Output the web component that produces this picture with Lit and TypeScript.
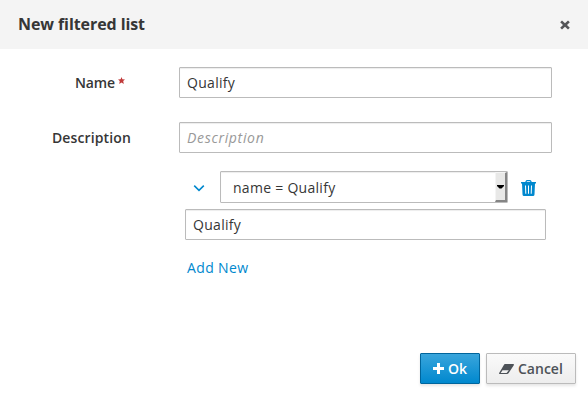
import { LitElement, html, css } from "lit";
import { customElement } from "lit/decorators.js";

@customElement("app-root")
export class AppRoot extends LitElement {
  static styles = css`
    :host {
      display: flex;
      flex-direction: column;
      box-sizing: border-box;
      width: 588px;
      height: 401px;
      background: #fff;
      color: #363636;
      font: 14px/20px "Open Sans", "Noto Sans", sans-serif;
      overflow: hidden;
    }
    * { box-sizing: border-box; }
    header {
      display: flex;
      align-items: center;
      justify-content: space-between;
      height: 49px;
      flex: none;
      padding: 0 18px;
      background: #f4f4f4;
    }
    h4 { margin: 0; padding-bottom: 2px; font-size: 16px; font-weight: 700; letter-spacing: -0.08px; }
    button { font: inherit; cursor: pointer; }
    .close { display: flex; padding: 0; border: 0; background: none; color: #545558; }
    svg { display: block; fill: currentColor; flex: none; }
    main { flex: 1; padding-top: 18px; }
    .row { display: flex; align-items: center; height: 31px; margin-bottom: 24px; }
    .label { width: 131px; margin-right: 48px; text-align: right; font-weight: 600; }
    .description { letter-spacing: 0.13px; }
    .required { display: flex; justify-content: flex-end; padding-right: 6px; gap: 3px; font-weight: 550; letter-spacing: -0.1px; }
    .required svg { color: #c03a3a; margin-top: 4px; }
    .field {
      display: block;
      height: 31px;
      margin: 0;
      padding: 0 7px;
      border: 1px solid #bbb;
      border-radius: 1px;
      outline: 0;
      background: #fff;
      box-shadow: inset 0 1px 1px rgba(3, 3, 3, 0.075);
      color: #363636;
      font: 14px/20px "Open Sans", "Noto Sans", sans-serif;
      letter-spacing: 0.3px;
    }
    .field::placeholder { color: #999; font-style: italic; opacity: 1; letter-spacing: 0.68px; }
    .wide { width: 373px; }
    .expression { display: flex; align-items: center; height: 32px; margin: -6px 0 6px 193px; color: #0088ce; }
    .expression > svg { margin-top: 2px; }
    .select {
      display: flex;
      align-items: center;
      width: 288px;
      height: 32px;
      margin: 0 13px 0 15px;
      border: 1px solid #bbb;
      border-radius: 1px;
      box-shadow: inset 0 1px 1px rgba(3, 3, 3, 0.075);
      color: #363636;
      letter-spacing: 0.28px;
    }
    .select span { flex: 1; padding: 2px 0 0 12px; }
    .arrow {
      display: flex;
      align-items: center;
      justify-content: center;
      width: 12px;
      height: 30px;
      border: 1px solid #f4f4f4;
      border-right: 2px solid #858585;
      border-bottom: 2px solid #858585;
      background: #e8e8e7;
      color: #000;
    }
    .value { width: 361px; margin-left: 185px; }
    .add { display: inline-block; margin: 18px 0 0 187px; color: #0088ce; text-decoration: none; letter-spacing: 0.36px; }
    footer { display: flex; justify-content: flex-end; gap: 6px; height: 48px; padding-right: 12px; }
    .btn {
      display: flex;
      align-items: center;
      height: 31px;
      padding: 0 12px;
      border: 1px solid #bbb;
      border-radius: 1px;
      background: linear-gradient(#fafafa, #ededed);
      box-shadow: 0 2px 3px rgba(3, 3, 3, 0.1);
      color: #4d5258;
      font-weight: 600;
    }
    .primary { width: 60px; border-color: #00659c; background: linear-gradient(#39a5dc, #0088ce); color: #fff; gap: 4px; }
    .primary span { font-weight: 550; }
    .cancel { width: 90px; gap: 4px; }
  `;

  render() {
    return html`
      <header>
        <h4>New filtered list</h4>
        <button class="close" aria-label="Close">
          <svg width="10" height="10" viewBox="0 0 10 10"><path d="M2 .5 5 3.200 8 .5 9.800 2.300 7 5 9.800 7.700 8 9.500 5 6.800 2 9.500.2 7.700 3 5 .2 2.300z" /></svg>
        </button>
      </header>
      <main>
        <div class="row">
          <label class="label required"><span>Name</span>
            <svg width="7" height="7" viewBox="0 0 7 7"><path d="M3.500 0l.9 2.200L7 2.400 5.200 4.100 5.800 7 3.500 5.600 1.200 7l.6-2.900L0 2.400l2.600-.2z" /></svg>
          </label>
          <input class="field wide" .value=${"Qualify"} />
        </div>
        <div class="row">
          <label class="label description">Description</label>
          <input class="field wide" placeholder="Description" />
        </div>
        <div class="expression">
          <svg width="12" height="8" viewBox="0 0 12 8"><path d="M1.200 1.700 6 6.300l4.800-4.600" fill="none" stroke="currentColor" stroke-width="1.6" /></svg>
          <div class="select" role="combobox">
            <span>name = Qualify</span>
            <div class="arrow"><svg width="7" height="4" viewBox="0 0 7 4"><path d="M0 0h7v1L4.500 3.500h-2L0 1z" /></svg></div>
          </div>
          <svg width="15" height="16" viewBox="0 0 15 16">
            <path fill-rule="evenodd" d="M0 2h4.200L5 .5Q5.300 0 6 0h3q.7 0 1 .5L10.800 2H15v1.600h-1L13.500 14.500Q13.400 16 12 16H3q-1.400 0-1.500-1.500L1 3.600H0zM5.600 2h3.800L9 1.200H6zM4 5.500l.3 8.300h1L5 5.500zM7 5.500v8.300h1V5.500zM10 5.500l-.3 8.300h1l.3-8.300z" />
          </svg>
        </div>
        <input class="field value" .value=${"Qualify"} />
        <a class="add">Add New</a>
      </main>
      <footer>
        <button class="btn primary">
          <svg width="11" height="11" viewBox="0 0 11 11"><path d="M4 0h3v4h4v3H7v4H4V7H0V4h4z" /></svg>
          <span>Ok</span>
        </button>
        <button class="btn cancel">
          <svg width="15" height="10" viewBox="0 0 15 10"><path fill-rule="evenodd" d="M6 0h8.300q1 .2.500 1.200L9.500 9.200Q9 10 8 10H.8Q-.3 9.800.3 8.800L5 .8Q5.300.1 6 0zM1.700 9H7.600l2.200-2.700H3.500z" /></svg>
          <span>Cancel</span>
        </button>
      </footer>
    `;
  }
}
